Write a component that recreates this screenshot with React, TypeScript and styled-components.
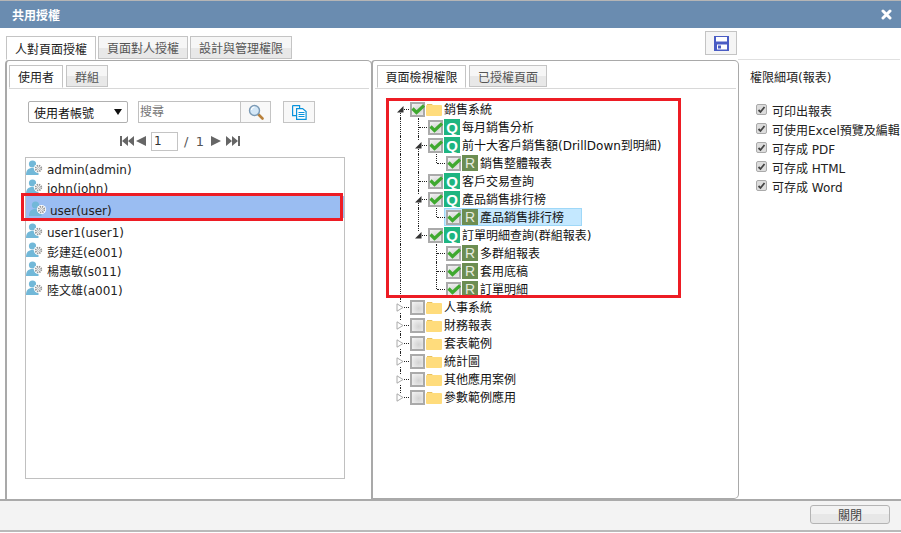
import React from 'react';
import styled, { createGlobalStyle } from 'styled-components';

const Global = createGlobalStyle`
  html, body { margin: 0; padding: 0; background: #fff; }
  body { font-family: "DejaVu Sans", "Noto Sans CJK TC", sans-serif; font-size: 12px; color: #222; }
  *, *::before, *::after { box-sizing: border-box; }
`;

const Dialog = styled.div`
  width: 901px; height: 532px; display: flex; flex-direction: column;
  border-top: 1px solid #b5b5b5; border-bottom: 2px solid #b9b9b9; background: #fff; overflow: hidden;
`;
const TitleBar = styled.div`
  height: 27px; flex: none; background: #6a8cb0; color: #fff; font-weight: 700; font-size: 12px;
  display: flex; align-items: center; justify-content: space-between; padding: 0 9px 0 12px;
`;
const Main = styled.div`
  flex: 1; min-height: 0; display: flex; padding-left: 5px;
`;
const Work = styled.div`
  width: 733px; flex: none; display: flex; flex-direction: column;
`;
const TopRow = styled.div`
  height: 32px; flex: none; display: flex; justify-content: space-between; align-items: flex-start;
  padding: 8px 0 0 1px;
`;
const TabStrip = styled.div`
  display: flex; gap: 2px; height: 24px; position: relative; z-index: 1;
`;
const Tab = styled.div<{ $active?: boolean; $w: number }>`
  width: ${p => p.$w}px; display: flex; align-items: center; justify-content: center;
  border: 1px solid #c4c4c4; color: ${p => (p.$active ? '#222' : '#555')};
  border-bottom: ${p => (p.$active ? '1px solid #fff' : '1px solid #c4c4c4')};
  background: ${p => (p.$active ? '#fff' : 'linear-gradient(#f6f6f6 50%, #e8e8e8 50%)')};
  height: ${p => (p.$active ? '100%' : 'calc(100% - 1px)')};
`;
const SaveButton = styled.button`
  width: 32px; height: 24px; margin: -5px 1px 0 0; padding: 0; border: 1px solid #c4c4c4; background: #f5f5f5;
  display: flex; align-items: center; justify-content: center;
`;
const Panels = styled.div`
  flex: 1; min-height: 0; display: grid; grid-template-columns: 367px 367px;
`;
const Panel = styled.section`
  border: 1px solid #a9a9a9; border-left-width: 2px; border-bottom: 0; border-radius: 4px 5px 0 0;
  padding: 4px 2px 0 2px; display: flex; flex-direction: column; min-height: 0; position: relative;
  &:last-child { margin-left: -1px; border-bottom: 1px solid #a9a9a9; border-radius: 4px 5px 5px 0; }
`;
const SubTabs = styled.div<{ $pad: number }>`
  height: 24px; flex: none; border-bottom: 1px solid #d8d8d8; padding-left: ${p => p.$pad}px; display: flex; gap: 3px;
`;
const UserTools = styled.div`
  display: flex; align-items: stretch; height: 22px; margin: 12px 0 0 19px;
`;
const SelectBox = styled.div`
  width: 100px; border: 1px solid #b0b0b0; border-radius: 2px; background: #fff; color: #111;
  display: flex; align-items: center; justify-content: space-between; padding: 0 5px;
`;
const SelectArrow = styled.span`
  width: 0; height: 0; border-left: 4px solid transparent; border-right: 4px solid transparent; border-top: 6px solid #111;
`;
const SearchInput = styled.input`
  width: 102px; margin-left: 10px; border: 1px solid #c0c0c0; border-right: 0; padding: 0 1px; outline: 0;
  font: inherit; color: #666; &::placeholder { color: #777; opacity: 1; }
`;
const IconButton = styled.button<{ $w: number; $gap?: number }>`
  width: ${p => p.$w}px; margin-left: ${p => p.$gap || 0}px; padding: 0; border: 1px solid #c4c4c4; background: #f8f8f8;
  display: flex; align-items: center; justify-content: center;
`;
const Pager = styled.div`
  display: flex; align-items: center; height: 20px; margin: 8px 0 0 111px; color: #555;
`;
const PagerGlyph = styled.svg<{ $gap?: number }>` margin-left: ${p => p.$gap || 0}px; display: block; `;
const PageInput = styled.input`
  width: 27px; height: 19px; margin: 0 6px 0 4px; border: 1px solid #c4c4c4; padding: 0 2px; font: inherit; color: #333; outline: 0;
`;
const PagerText = styled.span` font-size: 13px; font-weight: 500; width: 20px; display: flex; justify-content: space-between; margin-right: 6px; `;
const UserList = styled.ul`
  list-style: none; margin: 6px 0 0 16px; padding: 2px 0 0; width: 320px; height: 322px;
  border: 1px solid #c0c0c0; background: #fff;
`;
const UserRow = styled.li<{ $selected?: boolean }>`
  position: relative; display: flex; align-items: center; color: #222;
  height: ${p => (p.$selected ? 22 : 19)}px; padding-left: ${p => (p.$selected ? 3 : 0)}px;
  padding-top: ${p => (p.$selected ? 7 : 0)}px;
  margin: ${p => (p.$selected ? '-2px 0 5px' : 0)};
  background: ${p => (p.$selected ? '#9abdf2' : 'transparent')};
  ${p => p.$selected ? `&::after { content: ""; position: absolute; left: -5px; right: 1px; top: -3px; bottom: -3px; border: 3px solid #ed1c24; }` : ''}
`;
const TreeWrap = styled.div` padding: 11px 0 0 16px; `;
const RedGroup = styled.div`
  position: relative;
  &::after { content: ""; position: absolute; left: -5px; top: -2px; width: 295px; bottom: 0; border: 3px solid #ed1c24; pointer-events: none; }
`;
const TreeRow = styled.div` display: flex; height: 18px; align-items: center; color: #111; `;
const Cell = styled.span<{ $kind: string }>`
  width: 18px; height: 18px; flex: none; position: relative;
  &::before {
    content: ""; position: absolute; left: 9px; border-left: 1px dotted #222;
    display: ${p => (p.$kind === 'blank' ? 'none' : 'block')};
    top: ${p => (p.$kind === 'first' ? '9px' : '0')};
    bottom: ${p => (p.$kind === 'end' ? '9px' : '0')};
  }
  &::after {
    content: ""; position: absolute; left: 10px; width: 8px; top: 9px; border-top: 1px dotted #222;
    display: ${p => (p.$kind === 'pipe' || p.$kind === 'blank' ? 'none' : 'block')};
  }
`;
const Toggle = styled.svg`
  position: absolute; left: 5px; top: 5px; z-index: 1; display: block; background: #fff;
`;
const TreeItem = styled.div<{ $hl?: boolean }>`
  display: flex; align-items: center; height: 18px; padding-left: ${p => (p.$hl ? 2 : 1)}px; padding-right: ${p => (p.$hl ? 18 : 0)}px;
  background: ${p => (p.$hl ? '#c4e8ff' : 'transparent')};
  ${p => (p.$hl ? 'outline: 1px solid #9fd8f8; outline-offset: -1px; margin-left: -1px;' : '')}
`;
const Check = styled.span`
  width: 15px; height: 15px; flex: none; border: 2px solid #aaa; position: relative;
  background: radial-gradient(circle at 60% 60%, #d2d2d2, #f2f2f2 90%); display: block;
`;
const Badge = styled.span<{ $kind: 'Q' | 'R' }>`
  width: 16px; height: 16px; flex: none; margin-left: 1px; margin-right: 2px; font-family: "Liberation Sans", sans-serif;
  color: ${p => (p.$kind === 'Q' ? '#fff' : '#e6eadf')}; font-weight: ${p => (p.$kind === 'Q' ? 700 : 400)};
  font-size: ${p => (p.$kind === 'Q' ? 15 : 14)}px; display: flex; align-items: center; justify-content: center;
  background: ${p => (p.$kind === 'Q' ? '#1eb580' : '#6c8d52')};
`;
const TreeLabel = styled.span` padding-bottom: 2px; white-space: nowrap; `;
const FolderIcon = styled.svg` margin: 0 2px 0 1px; flex: none; display: block; `;
const Details = styled.aside`
  flex: 1; margin: 31px 6px 0 0; border-top: 1px solid #e0e0e0; padding: 10px 0 0 12px;
`;
const DetailTitle = styled.div` color: #222; height: 16px; line-height: 16px; margin-bottom: 15px; `;
const Perm = styled.label`
  display: flex; align-items: center; height: 19px; margin-left: 6px; white-space: nowrap; color: #222; font-size: 12px;
`;
const PermBox = styled.span`
  width: 11px; height: 11px; flex: none; margin-right: 5px; margin-top: -3px; border: 1px solid #aaa; border-radius: 2px;
  background: #ddd; display: flex; align-items: center; justify-content: center;
`;
const Footer = styled.div`
  height: 31px; flex: none; background: #f3f3f3; border-top: 2px solid #aaa; display: flex; justify-content: flex-end; padding: 4px 11px 0 0;
`;
const CloseButton = styled.button`
  width: 80px; height: 19px; border: 1px solid #b4b4b4; border-radius: 3px; padding: 0; font: inherit; color: #444;
  background: linear-gradient(#f2f2f2 50%, #e7e7e7 50%);
`;
const UserGlyph = styled.svg` flex: none; display: block; `;
const TickGlyph = styled.svg` position: absolute; left: -1px; top: -1px; `;

const Close = () => (
  <svg width="11" height="11" viewBox="0 0 11 11"><path d="M2 2l7 7M9 2l-7 7" stroke="#fff" strokeWidth="3" strokeLinecap="round" /></svg>
);
const Floppy = () => (
  <svg width="15" height="15" viewBox="0 0 15 15">
    <path d="M0 0h15v15H0z" fill="#4a5cc4" />
    <rect x="2" y="1" width="11" height="4.500" fill="#fff" />
    <rect x="3" y="8.500" width="10" height="5" fill="#fff" />
    <rect x="4" y="9.500" width="3" height="3" fill="#4a5cc4" />
  </svg>
);
const Magnifier = () => (
  <svg width="16" height="16" viewBox="0 0 16 16">
    <path d="M9.500 9.500L14.500 14.500" stroke="#b8803a" strokeWidth="2.600" strokeLinecap="round" />
    <circle cx="6.500" cy="6.500" r="5" fill="#d3e7f7" stroke="#7b9ab5" strokeWidth="1.400" />
    <path d="M3.500 6a3 3 0 0 1 3-3" stroke="#fff" strokeWidth="1.200" fill="none" />
  </svg>
);
const CopyIcon = () => (
  <svg width="15" height="15" viewBox="0 0 15 15" fill="none" stroke="#0a93dc" strokeWidth="1.200">
    <path d="M.6.6h7v3M.6.6v10h4" />
    <path d="M4.600 3.600h6l3.500 3v7.800H4.600z" fill="#fff" />
    <path d="M6.500 7.500h6M6.500 9.500h6M6.500 11.500h6" />
  </svg>
);
const UserIcon = () => (
  <UserGlyph width="21" height="19" viewBox="0 0 21 19">
    <circle cx="6.500" cy="4" r="3.600" fill="#72b8d8" />
    <path d="M0 15c0-4.500 2-7 6.500-7 3 0 5 1 6 3v4z" fill="#72b8d8" />
    <circle cx="12.500" cy="8.500" r="4.600" fill="#fff" />
    <circle cx="12.500" cy="8.500" r="2.800" fill="none" stroke="#999" strokeWidth="1.800" strokeDasharray="1.400 .800" />
    <circle cx="12.500" cy="8.500" r="1.100" fill="#eee" stroke="#888" strokeWidth=".5" />
  </UserGlyph>
);
const Folder = () => (
  <FolderIcon width="16" height="13" viewBox="0 0 16 13">
    <path d="M1 1h5l1 1.500H1z" fill="#e8c160" />
    <rect y="2" width="16" height="11" rx="1" fill="#ffdc7c" />
  </FolderIcon>
);
const TickMark = () => (
  <TickGlyph width="15" height="13" viewBox="0 0 15 13">
    <path d="M1.500 5.500l4 4 7.500-7" stroke="#3fa92f" strokeWidth="3.200" fill="none" />
  </TickGlyph>
);
const First = () => (
  <PagerGlyph width="14" height="12" viewBox="0 0 14 12">
    <path d="M0 1h2v10H0zM8 1v10L2 6zM14 1v10L8 6z" fill="#666" />
  </PagerGlyph>
);
const Prev = () => (
  <PagerGlyph $gap={2} width="11" height="12" viewBox="0 0 11 12"><path d="M10 1v10L0 6z" fill="#666" /></PagerGlyph>
);
const Next = () => (
  <PagerGlyph width="11" height="12" viewBox="0 0 11 12"><path d="M1 1v10l10-5z" fill="#666" /></PagerGlyph>
);
const Last = () => (
  <PagerGlyph $gap={5} width="14" height="12" viewBox="0 0 14 12">
    <path d="M14 1h-2v10h2zM6 1v10l6-5zM0 1v10l6-5z" fill="#666" />
  </PagerGlyph>
);

type Row = {
  guides: string[]; cell: string; toggle?: 'open' | 'closed'; on?: boolean;
  icon: 'F' | 'Q' | 'R'; text: string; hl?: boolean;
};
const redRows: Row[] = [
  { guides: [], cell: 'first', toggle: 'open', on: true, icon: 'F', text: '銷售系統' },
  { guides: ['pipe'], cell: 'tee', on: true, icon: 'Q', text: '每月銷售分析' },
  { guides: ['pipe'], cell: 'tee', toggle: 'open', on: true, icon: 'Q', text: '前十大客戶銷售額(DrillDown到明細)' },
  { guides: ['pipe', 'pipe'], cell: 'end', on: true, icon: 'R', text: '銷售整體報表' },
  { guides: ['pipe'], cell: 'tee', on: true, icon: 'Q', text: '客戶交易查詢' },
  { guides: ['pipe'], cell: 'tee', toggle: 'open', on: true, icon: 'Q', text: '產品銷售排行榜' },
  { guides: ['pipe', 'pipe'], cell: 'end', on: true, icon: 'R', text: '產品銷售排行榜', hl: true },
  { guides: ['pipe'], cell: 'end', toggle: 'open', on: true, icon: 'Q', text: '訂單明細查詢(群組報表)' },
  { guides: ['pipe', 'blank'], cell: 'tee', on: true, icon: 'R', text: '多群組報表' },
  { guides: ['pipe', 'blank'], cell: 'tee', on: true, icon: 'R', text: '套用底稿' },
  { guides: ['pipe', 'blank'], cell: 'end', on: true, icon: 'R', text: '訂單明細' },
];
const otherRows: Row[] = ['人事系統', '財務報表', '套表範例', '統計圖', '其他應用案例', '參數範例應用'].map((text, i) => ({
  guides: [], cell: i === 5 ? 'end' : 'tee', toggle: 'closed', icon: 'F', text,
}));

const TreeLine = ({ row }: { row: Row }) => (
  <TreeRow>
    {row.guides.map((g, i) => <Cell key={i} $kind={g} />)}
    <Cell $kind={row.cell}>
      {row.toggle === 'open' && (
        <Toggle width="8" height="8" viewBox="0 0 8 8"><path d="M7.500 1v6.500H1z" fill="#333" /></Toggle>
      )}
      {row.toggle === 'closed' && (
        <Toggle width="8" height="9" viewBox="0 0 8 9"><path d="M1 .8v7.400l6-3.700z" fill="#fff" stroke="#aaa" /></Toggle>
      )}
    </Cell>
    <TreeItem $hl={row.hl}>
      <Check>{row.on && <TickMark />}</Check>
      {row.icon === 'F' ? <Folder /> : <Badge $kind={row.icon}>{row.icon}</Badge>}
      <TreeLabel>{row.text}</TreeLabel>
    </TreeItem>
  </TreeRow>
);

const users = ['admin(admin)', 'john(john)', 'user(user)', 'user1(user1)', '彭建廷(e001)', '楊惠敏(s011)', '陸文雄(a001)'];
const perms = ['可印出報表', '可使用Excel預覽及編輯', '可存成 PDF', '可存成 HTML', '可存成 Word'];

export default function App() {
  return (
    <Dialog>
      <Global />
      <TitleBar><span>共用授權</span><Close /></TitleBar>
      <Main>
        <Work>
          <TopRow>
            <TabStrip>
              <Tab $active $w={90}>人對頁面授權</Tab>
              <Tab $w={90}>頁面對人授權</Tab>
              <Tab $w={102}>設計與管理權限</Tab>
            </TabStrip>
            <SaveButton><Floppy /></SaveButton>
          </TopRow>
          <Panels>
            <Panel>
              <SubTabs $pad={0}>
                <Tab $active $w={54}>使用者</Tab>
                <Tab $w={42}>群組</Tab>
              </SubTabs>
              <UserTools>
                <SelectBox>使用者帳號<SelectArrow /></SelectBox>
                <SearchInput placeholder="搜尋" />
                <IconButton $w={31}><Magnifier /></IconButton>
                <IconButton $w={32} $gap={12}><CopyIcon /></IconButton>
              </UserTools>
              <Pager>
                <First /><Prev />
                <PageInput value="1" readOnly />
                <PagerText><span>/</span><span>1</span></PagerText>
                <Next /><Last />
              </Pager>
              <UserList>
                {users.map(u => (
                  <UserRow key={u} $selected={u === 'user(user)'}><UserIcon />{u}</UserRow>
                ))}
              </UserList>
            </Panel>
            <Panel>
              <SubTabs $pad={2}>
                <Tab $active $w={89}>頁面檢視權限</Tab>
                <Tab $w={78}>已授權頁面</Tab>
              </SubTabs>
              <TreeWrap>
                <RedGroup>
                  {redRows.map((r, i) => <TreeLine key={i} row={r} />)}
                </RedGroup>
                {otherRows.map((r, i) => <TreeLine key={i} row={r} />)}
              </TreeWrap>
            </Panel>
          </Panels>
        </Work>
        <Details>
          <DetailTitle>權限細項(報表)</DetailTitle>
          {perms.map(p => (
            <Perm key={p}>
              <PermBox>
                <svg width="9" height="9" viewBox="0 0 9 9"><path d="M1.500 5l2 2 4-5" stroke="#444" strokeWidth="1.800" fill="none" /></svg>
              </PermBox>
              {p}
            </Perm>
          ))}
        </Details>
      </Main>
      <Footer><CloseButton>關閉</CloseButton></Footer>
    </Dialog>
  );
}
